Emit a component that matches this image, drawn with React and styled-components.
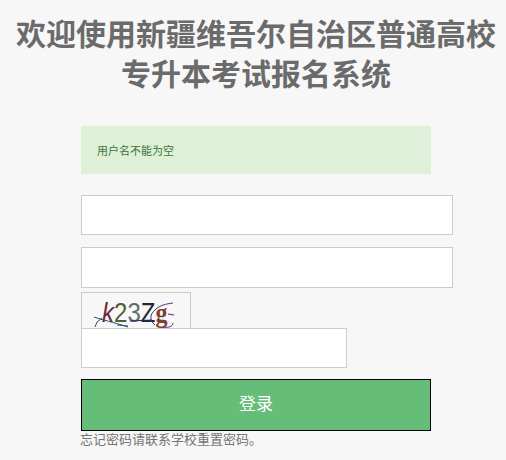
import React from "react"
import styled, { createGlobalStyle } from "styled-components"

const GlobalStyle = createGlobalStyle`
  html, body {
    margin: 0;
    padding: 0;
    background: #f7f7f7;
  }
  body {
    font-family: "Liberation Sans", "Noto Sans CJK SC", sans-serif;
    color: #666;
  }
`

const Page = styled.div`
  width: 506px;
  height: 460px;
  overflow: hidden;
  box-sizing: border-box;
  padding-top: 15px;
`

const Title = styled.h1`
  margin: 0;
  padding-left: 6px;
  font-size: 30px;
  line-height: 40px;
  font-weight: 700;
  text-align: center;
  color: #6b6b6b;
`

const LoginForm = styled.form`
  display: flex;
  flex-direction: column;
  align-items: flex-start;
  margin: 31px 0 0 81px;
`

const Message = styled.div`
  box-sizing: border-box;
  width: 350px;
  height: 48px;
  padding: 0 16px;
  display: flex;
  align-items: center;
  background: #dff0d8;
  color: #3c763d;
  font-size: 11px;
`

const Field = styled.input`
  display: block;
  box-sizing: border-box;
  width: ${(p) => p.$width}px;
  height: ${(p) => p.$height}px;
  margin-top: ${(p) => p.$top}px;
  padding: 0 10px;
  background: #fff;
  border: 1px solid #ccc;
  outline: none;
`

const CaptchaBox = styled.div`
  box-sizing: border-box;
  width: 110px;
  height: 36px;
  margin-top: 4px;
  border: 1px solid #ccc;
  border-bottom: 0;
  overflow: hidden;
`

const CaptchaArt = styled.svg`
  display: block;
  width: 108px;
  height: 35px;
`

const CaptchaText = styled.text`
  font-family: "Liberation Sans", sans-serif;
  font-size: 24px;
`

const CaptchaLastChar = styled.tspan`
  font-family: "Liberation Serif", serif;
  font-weight: 700;
`

const Submit = styled.button`
  box-sizing: border-box;
  width: 350px;
  height: 52px;
  margin-top: 11px;
  padding: 0 0 6px;
  background: #65bd77;
  border: 1px solid #000;
  color: #fff;
  font-family: inherit;
  font-size: 17px;
`

const Hint = styled.div`
  font-size: 13px;
  line-height: 15px;
  margin-top: 1px;
  margin-left: -1px;
  color: #747474;
`

function Captcha() {
  return (
    <CaptchaBox>
      <CaptchaArt viewBox="0 0 108 35">
        <CaptchaText transform="scale(1 1.12)" y="25.9">
          <tspan x="20" fill="#6b2a3a" fontStyle="italic">k</tspan>
          <tspan x="32" fill="#4f6130">2</tspan>
          <tspan x="45.4" fill="#5f6f6c">3</tspan>
          <tspan x="58.8" fill="#1f2b2b">Z</tspan>
          <CaptchaLastChar x="73.6" fill="#7d4030">g</CaptchaLastChar>
        </CaptchaText>
        <g fill="none" strokeWidth="1">
          <path d="M12 24 C20 27 31 29 46 34 M35 32 L46 33" stroke="#24566e" />
          <path d="M13 34 L15 29 L20 25" stroke="#24566e" />
          <path d="M48 28 L70 27" stroke="#2a2560" />
          <path d="M91 10 C84 11 78 12 73 17 C68 21 67 27 73 32 M86 21 L92 22 M91 30 C91 34 85 35 81 34" stroke="#5c2a78" />
        </g>
      </CaptchaArt>
    </CaptchaBox>
  )
}

export default function App() {
  return (
    <Page>
      <GlobalStyle />
      <Title>
        欢迎使用新疆维吾尔自治区普通高校
        <br />
        专升本考试报名系统
      </Title>
      <LoginForm onSubmit={(e) => e.preventDefault()}>
        <Message>用户名不能为空</Message>
        <Field $width={372} $height={40} $top={21} />
        <Field $width={372} $height={41} $top={12} type="password" />
        <Captcha />
        <Field $width={266} $height={40} $top={0} />
        <Submit type="submit">登录</Submit>
        <Hint>忘记密码请联系学校重置密码。</Hint>
      </LoginForm>
    </Page>
  )
}
